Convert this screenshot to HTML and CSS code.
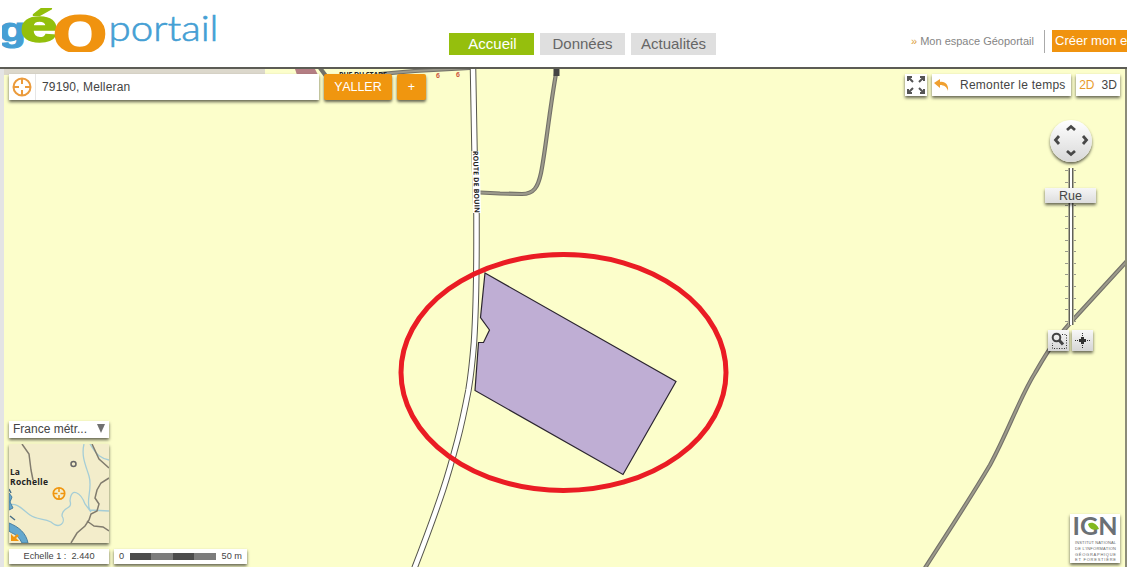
FILE: index.html
```html
<!DOCTYPE html>
<html lang="fr">
<head>
    <meta charset="UTF-8">
    <meta name="viewport" content="width=device-width, initial-scale=1.0">
    <title>Géoportail</title>
    <link rel="stylesheet" href="styles.css">
</head>
<body>
    <header class="header">
        <svg class="logo" width="220" height="60" viewBox="0 0 220 60">
            <defs>
                <clipPath id="logo-clip"><rect x="2" y="8" width="214" height="44"/></clipPath>
            </defs>
            <g clip-path="url(#logo-clip)">
                <text class="logo-g" x="-1" y="41" textLength="27" lengthAdjust="spacingAndGlyphs">g</text>
                <text class="logo-e" x="20" y="41.500" textLength="38" lengthAdjust="spacingAndGlyphs">é</text>
                <text class="logo-o" x="51" y="53" textLength="58" lengthAdjust="spacingAndGlyphs">o</text>
                <text class="logo-portail" x="108.500" y="41" textLength="110" lengthAdjust="spacingAndGlyphs">portail</text>
            </g>
        </svg>
        <nav class="tabs">
            <a class="tab active">Accueil</a>
            <a class="tab">Données</a>
            <a class="tab">Actualités</a>
        </nav>
        <div class="account">
            <a class="account-link"><span class="chevrons">»</span> Mon espace Géoportail</a>
            <a class="account-create">Créer mon e</a>
        </div>
    </header>

    <main class="map">
        <svg class="map-drawing" width="1121" height="498" viewBox="4 69 1121 498">
            <rect x="4" y="69" width="261" height="6" fill="#dcd8cc"/>
            <path d="M295 69H315L318 75H297Z" fill="#b47e83"/>
            <path class="lane-edge" d="M320 68L326 76"/>
            <path class="lane-edge" d="M380 74L415 71L470 68"/>
            <path class="lane" d="M380 74L415 71L470 68"/>
            <text class="street" x="339" y="77" textLength="48">RUE DU STADE</text>
            <text class="number" x="436" y="78">6</text>
            <text class="number" x="456" y="77">6</text>

            <path class="lane-edge" d="M480 192.500L500 193.500L522 194C534 194 538 187 541 173C546 148 549 112 557 68"/>
            <path class="lane" d="M480 192.500L500 193.500L522 194C534 194 538 187 541 173C546 148 549 112 557 68"/>
            <path class="end-mark" d="M556.500 69V76"/>
            <path class="lane-edge" d="M1127 261L1071 322C1050 346 1045 356 1035 373C1020 397 1008 432 990 465C968 502 948 532 925 568"/>
            <path class="lane" d="M1127 261L1071 322C1050 346 1045 356 1035 373C1020 397 1008 432 990 465C968 502 948 532 925 568"/>

            <path class="road-edge" d="M473 68L474.500 150L476.500 215V240C476.500 280 475.500 318 474 342C472.500 361 471.500 372 468.500 390C465 408 462 423 457.500 440C453 457 449 472 443 490C435 514 425 541 414.500 568"/>
            <path class="road" d="M473 68L474.500 150L476.500 215V240C476.500 280 475.500 318 474 342C472.500 361 471.500 372 468.500 390C465 408 462 423 457.500 440C453 457 449 472 443 490C435 514 425 541 414.500 568"/>
            <path d="M475.500 151L477 213" stroke="#fff" stroke-width="8"/>
            <text class="street" transform="translate(473 151) rotate(88.500)" textLength="62">ROUTE DE BOUIN</text>

            <path class="parcel" d="M485 273L676 381.500L623 474.500L475 390.500L478.500 342.500H483.500L489.500 330L480.500 317.500Z"/>
            <ellipse class="circled" cx="563.500" cy="372.500" rx="162.500" ry="118"/>
        </svg>

        <div class="search-bar">
            <div class="search box">
                <svg class="target" width="26" height="26" viewBox="0 0 26 26">
                    <circle cx="13" cy="13" r="8.500"/>
                    <path d="M13 4V10M13 16V22M4 13H10M16 13H22"/>
                </svg>
                <span class="search-text">79190, Melleran</span>
            </div>
            <button class="go">Y ALLER</button>
            <button class="more">+</button>
        </div>

        <div class="view-bar">
            <div class="box fullscreen">
                <svg width="22" height="22" viewBox="0 0 22 22" fill="none" stroke="#555" stroke-width="2">
                    <path d="M3 7V3H7M3 3L8 8M15 3H19V7M19 3L14 8M3 15V19H7M3 19L8 14M19 15V19H15M19 19L14 14"/>
                </svg>
            </div>
            <div class="box history">
                <svg width="18" height="14" viewBox="0 0 18 14">
                    <path d="M1 5L7 1V4C12 3 16 7 15 13C14 9 11 7 7 7V10Z" fill="#f0a030"/>
                </svg>
                <span>Remonter le temps</span>
            </div>
            <div class="box dimension"><span class="selected">2D</span><span>3D</span></div>
        </div>

        <div class="navigation">
            <div class="pan">
                <svg width="42" height="42" viewBox="0 0 42 42" fill="none" stroke="#484848" stroke-width="2.800">
                    <path d="M17 10L21 6.500L25 10M17 31L21 34.500L25 31M9 16L5.500 20L9 24M33 16L36.500 20L33 24"/>
                </svg>
            </div>
            <div class="zoom">
                <div class="zoom-rail"></div>
                <div class="zoom-label">Rue</div>
            </div>
            <div class="zoom-tools">
                <div class="tool">
                    <svg width="21" height="21" viewBox="0 0 21 21" fill="none">
                        <path d="M14 4.500H18.500V18.500H4.500V13" stroke="#333" stroke-dasharray="1 1.500"/>
                        <circle cx="8.500" cy="7.500" r="3.800" stroke="#444" stroke-width="2"/>
                        <path d="M11 10L15 14.500" stroke="#444" stroke-width="3"/>
                    </svg>
                </div>
                <div class="tool">
                    <svg width="21" height="21" viewBox="0 0 21 21">
                        <path d="M10.500 3V18M3 10.500H18" stroke="#333" stroke-dasharray="1 1"/>
                        <path d="M9 7H12V9H14V12H12V14H9V12H7V9H9Z" fill="#333"/>
                    </svg>
                </div>
            </div>
        </div>

        <div class="overview">
            <div class="box territory"><span>France métr...</span><span class="arrow"></span></div>
            <div class="box minimap">
                <svg width="100" height="99" viewBox="0 0 100 99" fill="none">
                    <rect width="100" height="99" fill="#f3edcb"/>
                    <path class="river" d="M75 0C72 12 77 22 80 32C84 45 76 58 81 66L100 67M0 61C8 58 14 66 21 71C28 76 35 74 42 78C51 86 57 78 53 72C53 62 64 66 61 57C62 42 72 49 76 60L82 68M81 0C88 12 92 14 100 16"/>
                    <path class="border" d="M13 0L20 10L22 26L24 36M83 0L90 15L100 24M100 34L92 39L88 46L86 54L90 60L88 67L82 70L80 76L76 82L68 89L62 99M78 77L85 82L94 83L100 87"/>
                    <path d="M0 49L3 53L1 58L4 64L0 66ZM0 79C10 83 17 89 19 99H13C8 89 3 90 0 87Z" fill="#64a8ce" stroke="#497e9e"/>
                    <path d="M0 45L2 49M1 72L6 76" stroke="#496f86" stroke-width="1.500"/>
                    <circle cx="64.500" cy="20" r="2.500" stroke="#666" stroke-width="1.500"/>
                    <text class="city" x="1" y="31">La</text>
                    <text class="city" x="1" y="41" textLength="38">Rochelle</text>
                    <circle cx="50" cy="49.500" r="5.700" stroke="#f0960f" stroke-width="1.700"/>
                    <path d="M50 44V48M50 51V55M44.500 49.500H48.500M51.500 49.500H55.500" stroke="#f0960f" stroke-width="1.500"/>
                    <path d="M2 90V97H10L7 94L10 92L8 90L5 93Z" fill="#f0960f"/>
                </svg>
            </div>
            <div class="scale">
                <div class="box scale-value">Echelle 1 :&nbsp; 2.440</div>
                <div class="box scale-bar">
                    <span>0</span>
                    <div class="segments"><i></i><i></i><i></i><i></i></div>
                    <span>50 m</span>
                </div>
            </div>
        </div>

        <div class="ign box">
            <svg width="50" height="49" viewBox="0 0 50 49">
                <text class="ign-name" x="2.500" y="21" textLength="45" lengthAdjust="spacingAndGlyphs">IGN</text>
                <path d="M18 10C22 7 27 10 29 15C24 17 19 15 18 10Z" fill="#83b91e"/>
                <g class="ign-caption">
                    <text x="5" y="29.500" textLength="41">INSTITUT NATIONAL</text>
                    <text x="5" y="35.500" textLength="41">DE L'INFORMATION</text>
                    <text x="5" y="41.500" textLength="41">GÉOGRAPHIQUE</text>
                    <text x="5" y="47" textLength="41">ET FORESTIÈRE</text>
                </g>
            </svg>
        </div>
    </main>
</body>
</html>
```
FILE: styles.css
```css
body {
    margin: 0;
    height: 567px;
    overflow: hidden;
    background-color: #fff;
    font-family: "Liberation Sans", Arial, sans-serif;
    font-size: 12px;
    color: #444;
}
svg {
    display: block;
}
.header {
    display: flex;
    box-sizing: border-box;
    height: 69px;
    border-bottom: 2px solid #5c5c55;
}
.logo {
    flex: none;
}
.logo-g, .logo-e, .logo-o {
    font-weight: bold;
}
.logo-g {
    font-size: 33px;
    fill: #459fd4;
    stroke: #459fd4;
}
.logo-e {
    font-size: 46px;
    fill: #93bf0c;
    stroke: #93bf0c;
    stroke-width: 1.5;
}
.logo-o {
    font-size: 72px;
    fill: #f0930f;
}
.logo-portail {
    font-family: Lato, sans-serif;
    font-size: 35px;
    font-weight: 300;
    fill: #459fd4;
    stroke: #459fd4;
    stroke-width: 0.6;
}
.tabs {
    display: flex;
    flex: none;
    gap: 6px;
    margin: 33px 0 0 229px;
}
.tab {
    width: 85px;
    height: 22px;
    line-height: 22px;
    background-color: #dfdfdf;
    color: #666;
    font-size: 15px;
    text-align: center;
}
.tab.active {
    background-color: #95bf0d;
    color: #fff;
    text-indent: 2px;
}
.account {
    display: flex;
    flex: 1;
    min-width: 0;
    margin: 30px 0 0 195px;
    height: 23px;
}
.account-link {
    flex: none;
    width: 133px;
    border-right: 1px solid #aaa;
    line-height: 22px;
    font-size: 11px;
    color: #858585;
    white-space: nowrap;
}
.chevrons {
    color: #dca03c;
}
.account-create {
    flex: 1;
    min-width: 0;
    height: 22px;
    margin-left: 7px;
    padding-left: 3px;
    line-height: 21px;
    background-color: #f0930f;
    color: #fff;
    font-size: 13px;
    white-space: nowrap;
}

/* map */
.map {
    position: relative;
    box-sizing: border-box;
    height: 498px;
    border-left: 4px solid #e4e4e4;
    border-right: 2px solid #8c8c78;
    background-color: #fcfecb;
    overflow: hidden;
}
.lane-edge, .lane, .road-edge, .road {
    fill: none;
}
.lane-edge {
    stroke: #737168;
    stroke-width: 4.2;
}
.lane {
    stroke: #9c9a8c;
    stroke-width: 2;
}
.road-edge {
    stroke: #55554c;
    stroke-width: 6.5;
}
.road {
    stroke: #fff;
    stroke-width: 4.5;
}
.end-mark {
    stroke: #444;
    stroke-width: 6;
}
.street {
    font-family: "Open Sans", sans-serif;
    font-size: 7px;
    font-weight: bold;
    fill: #222;
}
.number {
    font-size: 7px;
    font-weight: bold;
    fill: #cc5540;
}
.parcel {
    fill: #bfaed4;
    stroke: #2b2530;
    stroke-width: 1.2;
}
.circled {
    fill: none;
    stroke: #ea1c24;
    stroke-width: 5;
}
.box {
    background-color: #fff;
    box-shadow: 0 2px 3px rgba(0, 0, 0, 0.6);
}

/* toolbars over the map */
.search-bar {
    position: absolute;
    top: 5px;
    left: 5px;
    display: flex;
    gap: 5px;
}
.search {
    display: flex;
    width: 310px;
    height: 26px;
    line-height: 26px;
}
.target {
    border-right: 1px solid #e6e6e6;
    fill: none;
    stroke: #eb9b3c;
    stroke-width: 2;
}
.search-text {
    padding-left: 6px;
    letter-spacing: 0.15px;
}
.go, .more {
    height: 26px;
    padding: 0;
    border: none;
    border-radius: 2px;
    background-color: #f0960f;
    color: #fff;
    font-family: inherit;
    font-size: 12.5px;
    box-shadow: 0 2px 3px rgba(0, 0, 0, 0.6);
}
.go {
    width: 68px;
    word-spacing: -3px;
}
.more {
    width: 29px;
}
.view-bar {
    position: absolute;
    top: 5px;
    right: 5px;
    display: flex;
    gap: 5px;
    height: 22px;
    line-height: 22px;
}
.fullscreen {
    width: 22px;
}
.history {
    display: flex;
    align-items: center;
    gap: 9px;
    box-sizing: border-box;
    width: 139px;
    padding-left: 1px;
    font-size: 12px;
    letter-spacing: 0.25px;
    white-space: nowrap;
}
.dimension {
    display: flex;
    justify-content: center;
    gap: 7px;
    width: 44px;
}
.selected {
    color: #e89b2c;
}
.navigation {
    position: absolute;
    top: 51px;
    right: 28px;
    display: flex;
    flex-direction: column;
    align-items: center;
    width: 53px;
}
.pan {
    width: 42px;
    height: 42px;
    border-radius: 50%;
    background: linear-gradient(#fff, #d8d8d8);
    box-shadow: 0 2px 3px rgba(0, 0, 0, 0.6);
}
.zoom {
    position: relative;
    width: 51px;
    height: 157px;
    margin-top: 6px;
}
.zoom-rail {
    box-sizing: border-box;
    width: 11px;
    height: 157px;
    margin: 0 auto;
    background:
        linear-gradient(90deg, #b0b096 0 1px, #606058 1px 2px, #fff 2px 4px, #606058 4px 5px, #b0b096 5px 6px) center / 6px 100% no-repeat,
        repeating-linear-gradient(transparent 0 2px, #99998a 2px 3px, transparent 3px 11.6px);
}
.zoom-label {
    position: absolute;
    top: 20px;
    left: 0;
    width: 51px;
    height: 15px;
    line-height: 16px;
    background: linear-gradient(#f6f6f6, #ddd);
    box-shadow: 0 2px 3px rgba(0, 0, 0, 0.6);
    font-size: 12.5px;
    text-align: center;
}
.zoom-tools {
    display: flex;
    gap: 3px;
    margin-top: 5px;
}
.tool {
    width: 21px;
    height: 21px;
    background: linear-gradient(#f8f8f8, #d5d5d5);
    box-shadow: 0 2px 3px rgba(0, 0, 0, 0.6);
}
.overview {
    position: absolute;
    left: 5px;
    bottom: 3px;
    display: flex;
    flex-direction: column;
    gap: 6px;
}
.territory {
    display: flex;
    justify-content: space-between;
    box-sizing: border-box;
    width: 100px;
    height: 17px;
    padding: 0 4px;
    line-height: 17px;
}
.arrow {
    margin-top: 3px;
    border-top: 9px solid #707070;
    border-left: 4.5px solid transparent;
    border-right: 4.5px solid transparent;
    height: 0;
}
.minimap {
    width: 100px;
    height: 99px;
}
.river {
    stroke: #a5cdd6;
    stroke-width: 1.3;
}
.border {
    stroke: #817c6e;
    stroke-width: 1.5;
}
.city {
    font-family: "Open Sans", sans-serif;
    font-size: 8.5px;
    font-weight: bold;
    fill: #222;
}
.scale {
    display: flex;
    gap: 5px;
    height: 15px;
    line-height: 15px;
    font-size: 9.2px;
}
.scale-value {
    width: 100px;
    text-align: center;
}
.scale-bar {
    display: flex;
    align-items: center;
    justify-content: space-between;
    box-sizing: border-box;
    width: 133px;
    padding: 0 5px;
}
.segments {
    display: flex;
    width: 86px;
    height: 7px;
}
.segments i {
    flex: 1;
    background-color: #7c7c7c;
}
.segments i:nth-child(odd) {
    background-color: #4c4c4c;
}
.ign {
    position: absolute;
    right: 5px;
    bottom: 4px;
    width: 50px;
    height: 49px;
}
.ign-name {
    font-family: Lato, sans-serif;
    font-size: 25px;
    font-weight: bold;
    fill: #6b7075;
}
.ign-caption {
    font-size: 4px;
    fill: #666;
}
```
